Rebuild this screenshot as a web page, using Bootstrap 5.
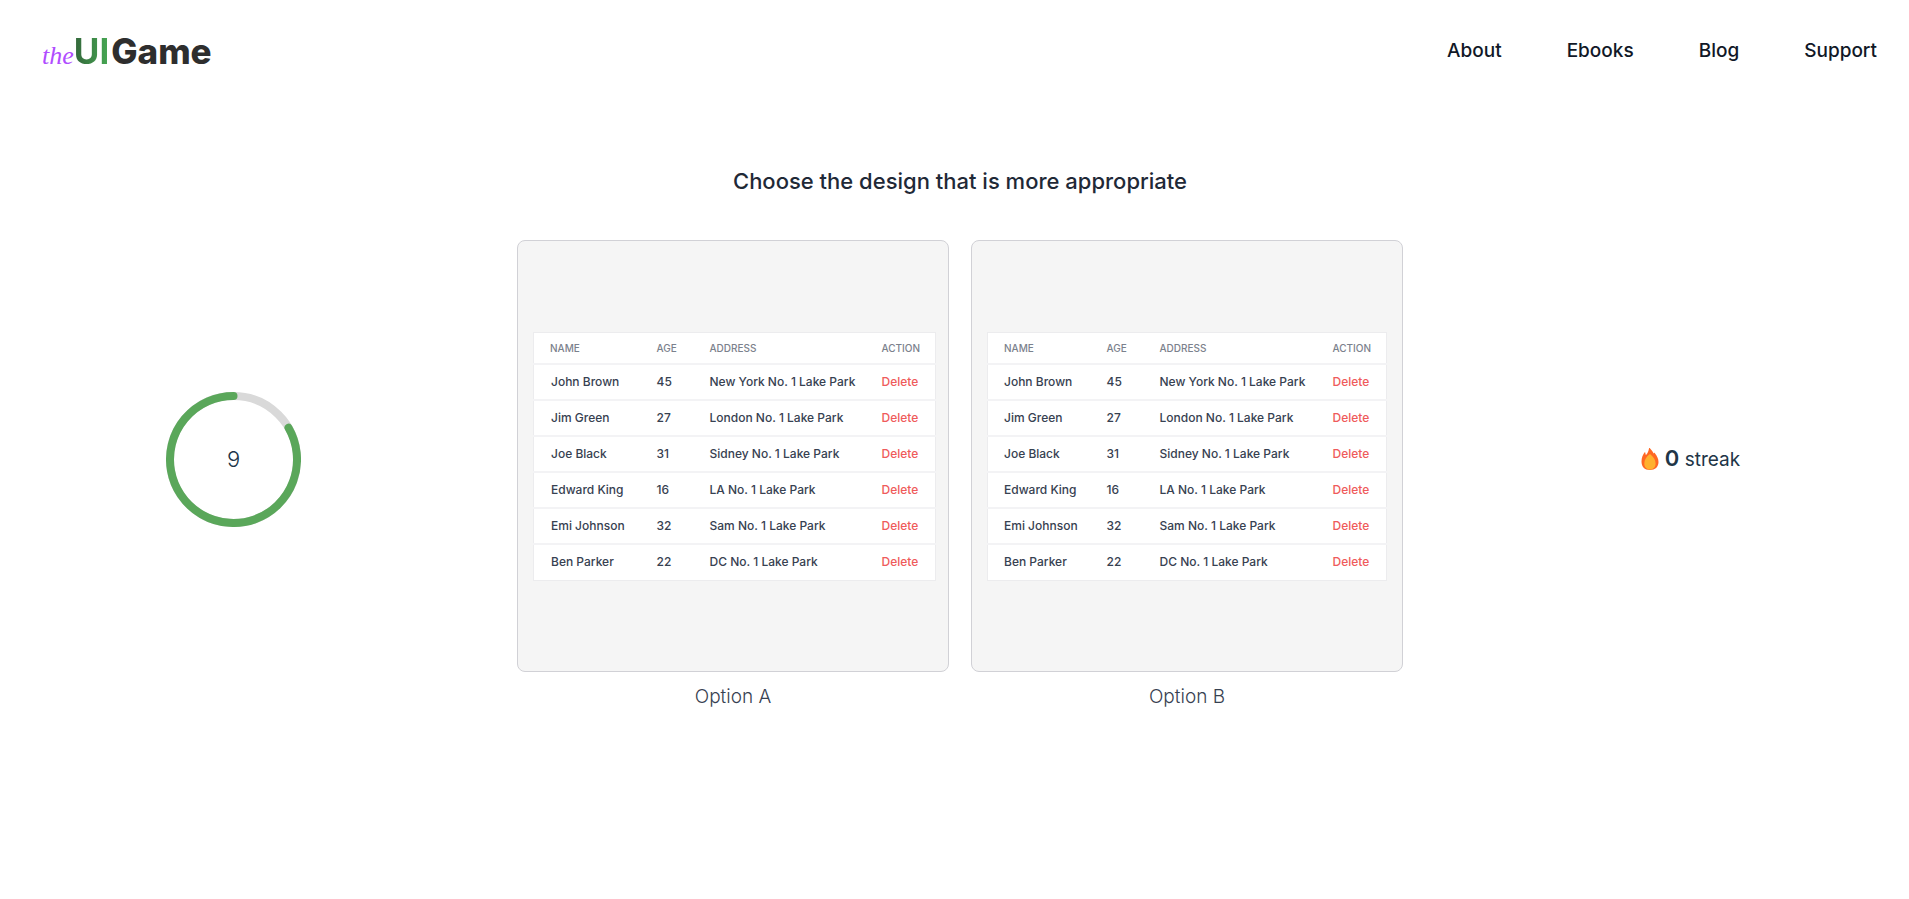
<!DOCTYPE html>
<html lang="en">
<head>
<meta charset="utf-8">
<meta name="viewport" content="width=device-width, initial-scale=1">
<title>The UI Game</title>
<link href="https://cdn.jsdelivr.net/npm/bootstrap@5.3.0/dist/css/bootstrap.min.css" rel="stylesheet">
<style>
  body { font-family: Inter, "Liberation Sans", sans-serif; color: #213547; background: #fff; }

  .site-header { padding: 24px 32px 22px 42px; }
  .logo { font-size: 35px; line-height: 54px; font-weight: 800; color: #2e2e2e; }
  .logo-the { font: italic 400 26px/26px "Liberation Serif", serif; color: #b04dff; }
  .logo-ui { font-weight: 700; margin-right: 2px; color: transparent; background: linear-gradient(90deg, #33663a, #47a854); -webkit-background-clip: text; background-clip: text; }
  .site-links { gap: 65px; }
  .site-links a { padding: 0; font-size: 19px; line-height: 28px; font-weight: 500; color: #111827; }

  .game { padding: 65px 0 0 11px; }
  @media (min-width: 1400px) {
    .game { display: grid; grid-template-columns: 1fr 1008px 1fr; align-items: center; }
  }
  .prompt { font-size: 22px; line-height: 32px; font-weight: 500; color: #1f2937; margin-bottom: 43px; }
  .options { gap: 22px; padding-bottom: 42px; }
  .option-box { width: 432px; max-width: 100%; aspect-ratio: 1; background: #f5f5f5; border: 1px solid #d1d1d6; border-radius: 8px; }
  .option-a .option-box { padding: 0 12px 0 15px; }
  .option-b .option-box { padding: 0 15px; }
  .option-name { font-size: 19px; line-height: 28px; font-weight: 300; color: #374151; margin-top: 11px; }

  .people { table-layout: fixed; width: 100%; background: #fff; border: 1px solid #ececee; border-collapse: collapse; }
  .people tr { border-bottom: 2px solid #f3f3f5; height: 36px; }
  .people thead tr { height: 32px; }
  .people tbody tr:last-child { border-bottom: 0; }
  .people th, .people td { padding: 0; white-space: nowrap; }
  .people th { font-size: 10px; line-height: 16px; font-weight: 500; color: #7b818c; }
  .people td { font-size: 12px; line-height: 18px; font-weight: 500; color: #374151; }
  .people th:first-child, .option-b .people td:first-child { padding-left: 16px; }
  .option-a .people td:first-child { padding-left: 17px; }
  .col-name { width: 123px; }
  .option-b .col-name { width: 119px; }
  .col-age { width: 53px; }
  .col-action { width: 54px; }
  .delete { padding: 0; border: 0; background: none; font-weight: 500; color: #ef5b5b; }

  .timer { width: 135px; height: 135px; display: grid; place-items: center; font-size: 22px; font-weight: 300; }
  .timer > * { grid-area: 1 / 1; }
  .streak { font-size: 19px; line-height: 28px; gap: 6px; padding-left: 8px; }
  .streak-count { font-size: 22px; font-weight: 600; }
</style>
</head>
<body>
<header class="site-header d-flex flex-wrap align-items-center justify-content-between">
  <a class="logo text-decoration-none d-flex align-items-baseline" href="#"><span class="logo-the">the</span><span class="logo-ui">UI</span><span>Game</span></a>
  <nav class="site-links nav">
    <a class="nav-link" href="#">About</a>
    <a class="nav-link" href="#">Ebooks</a>
    <a class="nav-link" href="#">Blog</a>
    <a class="nav-link" href="#">Support</a>
  </nav>
</header>

<main class="game">
  <div class="timer mx-auto" role="timer">
    <svg width="135" height="135" viewBox="0 0 135 135" fill="none" stroke-width="8" aria-hidden="true">
      <circle cx="67.5" cy="67.5" r="63.5" stroke="#d9d9d9"/>
      <path d="M122.5 35.75A63.5 63.5 0 1 1 67.5 4" stroke="#5aa75a" stroke-linecap="round"/>
    </svg>
    <span>9</span>
  </div>

  <section>
    <h1 class="prompt text-center">Choose the design that is more appropriate</h1>
    <div class="options d-flex flex-wrap justify-content-center">
      <div class="option-a">
        <div class="option-box d-flex align-items-center">
          <table class="people">
            <colgroup><col class="col-name"><col class="col-age"><col><col class="col-action"></colgroup>
            <thead><tr><th>NAME</th><th>AGE</th><th>ADDRESS</th><th>ACTION</th></tr></thead>
            <tbody>
              <tr><td>John Brown</td><td>45</td><td>New York No. 1 Lake Park</td><td><button class="delete" type="button">Delete</button></td></tr>
              <tr><td>Jim Green</td><td>27</td><td>London No. 1 Lake Park</td><td><button class="delete" type="button">Delete</button></td></tr>
              <tr><td>Joe Black</td><td>31</td><td>Sidney No. 1 Lake Park</td><td><button class="delete" type="button">Delete</button></td></tr>
              <tr><td>Edward King</td><td>16</td><td>LA No. 1 Lake Park</td><td><button class="delete" type="button">Delete</button></td></tr>
              <tr><td>Emi Johnson</td><td>32</td><td>Sam No. 1 Lake Park</td><td><button class="delete" type="button">Delete</button></td></tr>
              <tr><td>Ben Parker</td><td>22</td><td>DC No. 1 Lake Park</td><td><button class="delete" type="button">Delete</button></td></tr>
            </tbody>
          </table>
        </div>
        <div class="option-name text-center">Option A</div>
      </div>
      <div class="option-b">
        <div class="option-box d-flex align-items-center">
          <table class="people">
            <colgroup><col class="col-name"><col class="col-age"><col><col class="col-action"></colgroup>
            <thead><tr><th>NAME</th><th>AGE</th><th>ADDRESS</th><th>ACTION</th></tr></thead>
            <tbody>
              <tr><td>John Brown</td><td>45</td><td>New York No. 1 Lake Park</td><td><button class="delete" type="button">Delete</button></td></tr>
              <tr><td>Jim Green</td><td>27</td><td>London No. 1 Lake Park</td><td><button class="delete" type="button">Delete</button></td></tr>
              <tr><td>Joe Black</td><td>31</td><td>Sidney No. 1 Lake Park</td><td><button class="delete" type="button">Delete</button></td></tr>
              <tr><td>Edward King</td><td>16</td><td>LA No. 1 Lake Park</td><td><button class="delete" type="button">Delete</button></td></tr>
              <tr><td>Emi Johnson</td><td>32</td><td>Sam No. 1 Lake Park</td><td><button class="delete" type="button">Delete</button></td></tr>
              <tr><td>Ben Parker</td><td>22</td><td>DC No. 1 Lake Park</td><td><button class="delete" type="button">Delete</button></td></tr>
            </tbody>
          </table>
        </div>
        <div class="option-name text-center">Option B</div>
      </div>
    </div>
  </section>

  <div class="streak d-flex align-items-center justify-content-center">
    <svg width="18" height="22" viewBox="0 0 18 22" aria-hidden="true">
      <path fill="#ff6723" d="M9 22C3.500 22 .5 18.500.5 13.500.5 9.500 2 6.500 3.500 4.500 4 4 4.400 4.300 4.400 5c0 1 .2 1.700.6 2C6.500 5.500 7.500 3.500 8 .6 8.100 0 8.700 0 9.100.4 11 2.400 12 4 12.700 5.500 13 4.700 13.500 4.600 13.900 5.200 16 8 17.500 10.500 17.500 14 17.500 19 14 22 9 22Z"/>
      <path fill="#ffb02e" d="M9 21.500c-3.600 0-5.700-2.500-5.700-6C3.300 11.700 5.500 9 8.300 6.600c.4-.4.900-.4 1.300 0 2.800 2.500 5 5.200 5 8.900 0 3.500-2.200 6-5.600 6Z"/>
    </svg>
    <span><span class="streak-count">0</span> streak</span>
  </div>
</main>
<script src="https://cdn.jsdelivr.net/npm/bootstrap@5.3.0/dist/js/bootstrap.bundle.min.js"></script>
</body>
</html>
